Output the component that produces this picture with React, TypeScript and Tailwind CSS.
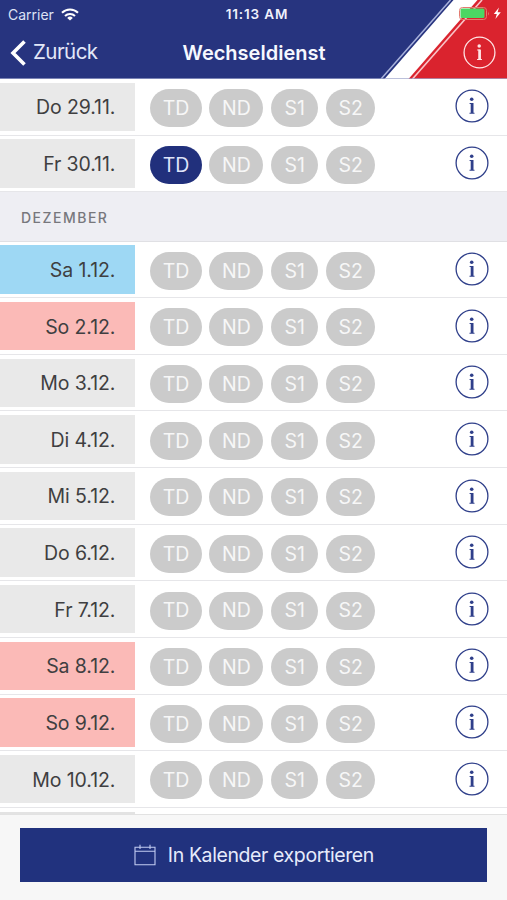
import React from "react";

type Tone = "gray" | "blue" | "red";
type Day = { label: string; tone: Tone; active?: string };

const november: Day[] = [
  { label: "Do 29.11.", tone: "gray" },
  { label: "Fr 30.11.", tone: "gray", active: "TD" },
];

const december: Day[] = [
  { label: "Sa 1.12.", tone: "blue" },
  { label: "So 2.12.", tone: "red" },
  { label: "Mo 3.12.", tone: "gray" },
  { label: "Di 4.12.", tone: "gray" },
  { label: "Mi 5.12.", tone: "gray" },
  { label: "Do 6.12.", tone: "gray" },
  { label: "Fr 7.12.", tone: "gray" },
  { label: "Sa 8.12.", tone: "red" },
  { label: "So 9.12.", tone: "red" },
  { label: "Mo 10.12.", tone: "gray" },
];

const tones: Record<Tone, string> = {
  gray: "bg-[#e9e9e9]",
  blue: "bg-[#9ed8f4]",
  red: "bg-[#fbbab7]",
};

const shifts = [
  { name: "TD", size: "w-[52px] mr-[7.5px]" },
  { name: "ND", size: "w-[54px] mr-2" },
  { name: "S1", size: "w-[46.5px] mr-2" },
  { name: "S2", size: "w-[49.5px]" },
];

function InfoIcon({ className }: { className: string }) {
  return (
    <svg viewBox="0 0 34 34" className={className} fill="none" stroke="currentColor">
      <circle cx="17" cy="17" r="15.9" strokeWidth="1.3" />
      <circle cx="16.7" cy="10.2" r="1.8" fill="currentColor" stroke="none" />
      <path d="M17.1 14v10" strokeWidth="2.8" />
      <path d="M14.6 14.5h3M14.5 24.2h5" strokeWidth="1.1" />
    </svg>
  );
}

function DayRow({ day }: { day: Day }) {
  return (
    <div className="flex h-[56.63px] shrink-0 items-start border-b border-[#e6e6e9] bg-white pt-[3.8px]">
      <div
        className={`flex h-[48.4px] w-[135.3px] items-center justify-end pr-5 pt-[2px] text-[19.5px] tracking-[-0.1px] text-[#3f3f41] ${tones[day.tone]}`}
      >
        {day.label}
      </div>
      <div className="ml-[14.7px] mt-[6.5px] flex">
        {shifts.map((s) => (
          <button
            key={s.name}
            className={`flex h-[38px] items-center justify-center rounded-full pt-px text-[19.5px] ${s.size} ${
              day.active === s.name ? "bg-[#21307c] text-[#dfe5fa]" : "bg-[#cbcbcb] text-[#f7f7f7]"
            }`}
          >
            {s.name}
          </button>
        ))}
      </div>
      <InfoIcon className="ml-auto mr-[18px] mt-[6.7px] size-[34px] text-[#2f3f8a]" />
    </div>
  );
}

function Header() {
  return (
    <header className="relative h-[79px] shrink-0 bg-[#27347f] text-white">
      <svg viewBox="0 0 507 79" className="absolute inset-0 h-full w-full">
        <path d="M453.5 0H507V79H384.5Z" fill="#fff" />
        <path d="M450.5 0L381 79" stroke="#a9b2dc" strokeWidth="1.5" />
        <path d="M477.5 0H507V79H408.5Z" fill="#da232e" />
        <path d="M482 0L412.5 79" stroke="#f9c5c9" strokeWidth="1.6" />
        <rect x="459.5" y="7.5" width="27" height="12" rx="3" fill="none" stroke="#e37a70" strokeWidth="1" />
        <rect x="460.5" y="8.5" width="24" height="9.5" rx="1.5" fill="#4bd763" />
        <path d="M488 11.5q1.6 2 0 4z" fill="#e37a70" />
        <path d="M499 7.5l-5.2 6.6h3l-1.4 5 5.4-6.8h-3.2z" fill="#fff" />
      </svg>
      <div className="relative grid h-7 grid-cols-[1fr_auto_1fr] items-center text-[13.5px]">
        <div className="flex items-center gap-[7px] pl-2 text-[#dde2f5]">
          <span className="text-[14px]">Carrier</span>
          <svg viewBox="0 0 18 13" className="h-[13px] w-[18px]" fill="none" stroke="#fff" strokeWidth="2.1">
            <path d="M1 4.8a11.5 11.5 0 0 1 16 0" />
            <path d="M4 8a7.2 7.2 0 0 1 10 0" />
            <path d="M9 12.6L6.2 9.9a4 4 0 0 1 5.6 0z" fill="#fff" stroke="none" />
          </svg>
        </div>
        <span className="pl-[7px] font-semibold tracking-[0.85px] text-[#f0f2fc]">11:13 AM</span>
        <span />
      </div>
      <div className="relative grid h-[48px] grid-cols-[1fr_auto_1fr] items-center">
        <button className="flex items-center gap-[7px] pl-[10px] pt-px text-[20.5px] tracking-[-0.55px] text-[#e3e7f8]">
          <svg viewBox="0 0 16 26" className="h-[26px] w-4" fill="none" stroke="#fff" strokeWidth="3.6">
            <path d="M14.5 1.5L3 13l11.5 11.5" />
          </svg>
          Zurück
        </button>
        <h1 className="pl-px pt-px text-[20px] font-semibold text-[#f6f8ff]">Wechseldienst</h1>
        <InfoIcon className="mr-[11px] size-[33px] justify-self-end text-[#ffe5e5]" />
      </div>
      <div className="absolute inset-x-0 bottom-0 h-px bg-[#9ea5cc]/70" />
    </header>
  );
}

export default function App() {
  return (
    <div className="flex h-[900px] w-[507px] flex-col overflow-hidden bg-white font-['Inter',sans-serif]">
      <Header />
      <main className="flex min-h-0 flex-1 flex-col overflow-hidden">
        {november.map((d) => (
          <DayRow key={d.label} day={d} />
        ))}
        <h2 className="flex h-[49.3px] shrink-0 items-center border-b border-[#e0e0e4] bg-[#eeeef3] pl-[21px] pt-[2px] text-[14px] font-medium tracking-[1.5px] text-[#77777c]">
          DEZEMBER
        </h2>
        {december.map((d) => (
          <DayRow key={d.label} day={d} />
        ))}
        <div className="mt-[3.8px] w-[135.3px] flex-1 bg-[#e3e3e3]" />
      </main>
      <footer className="h-[86px] shrink-0 border-t border-[#e2e2e2] bg-[#f7f7f7] px-[20.4px] pt-[12.5px]">
        <button className="flex h-[54.5px] w-[467px] items-center justify-center gap-3 bg-[#21327e] pt-px text-[19.5px] tracking-[-0.4px] text-[#e6ebfb]">
          <svg viewBox="0 0 22 22" className="size-[22px]" fill="none" stroke="#c3cdf2" strokeWidth="1.1">
            <path d="M1 3.2h20v17.6H1zM1 7.2h20M6 .8v4.2M16 .8v4.2" />
          </svg>
          In Kalender exportieren
        </button>
      </footer>
    </div>
  );
}
